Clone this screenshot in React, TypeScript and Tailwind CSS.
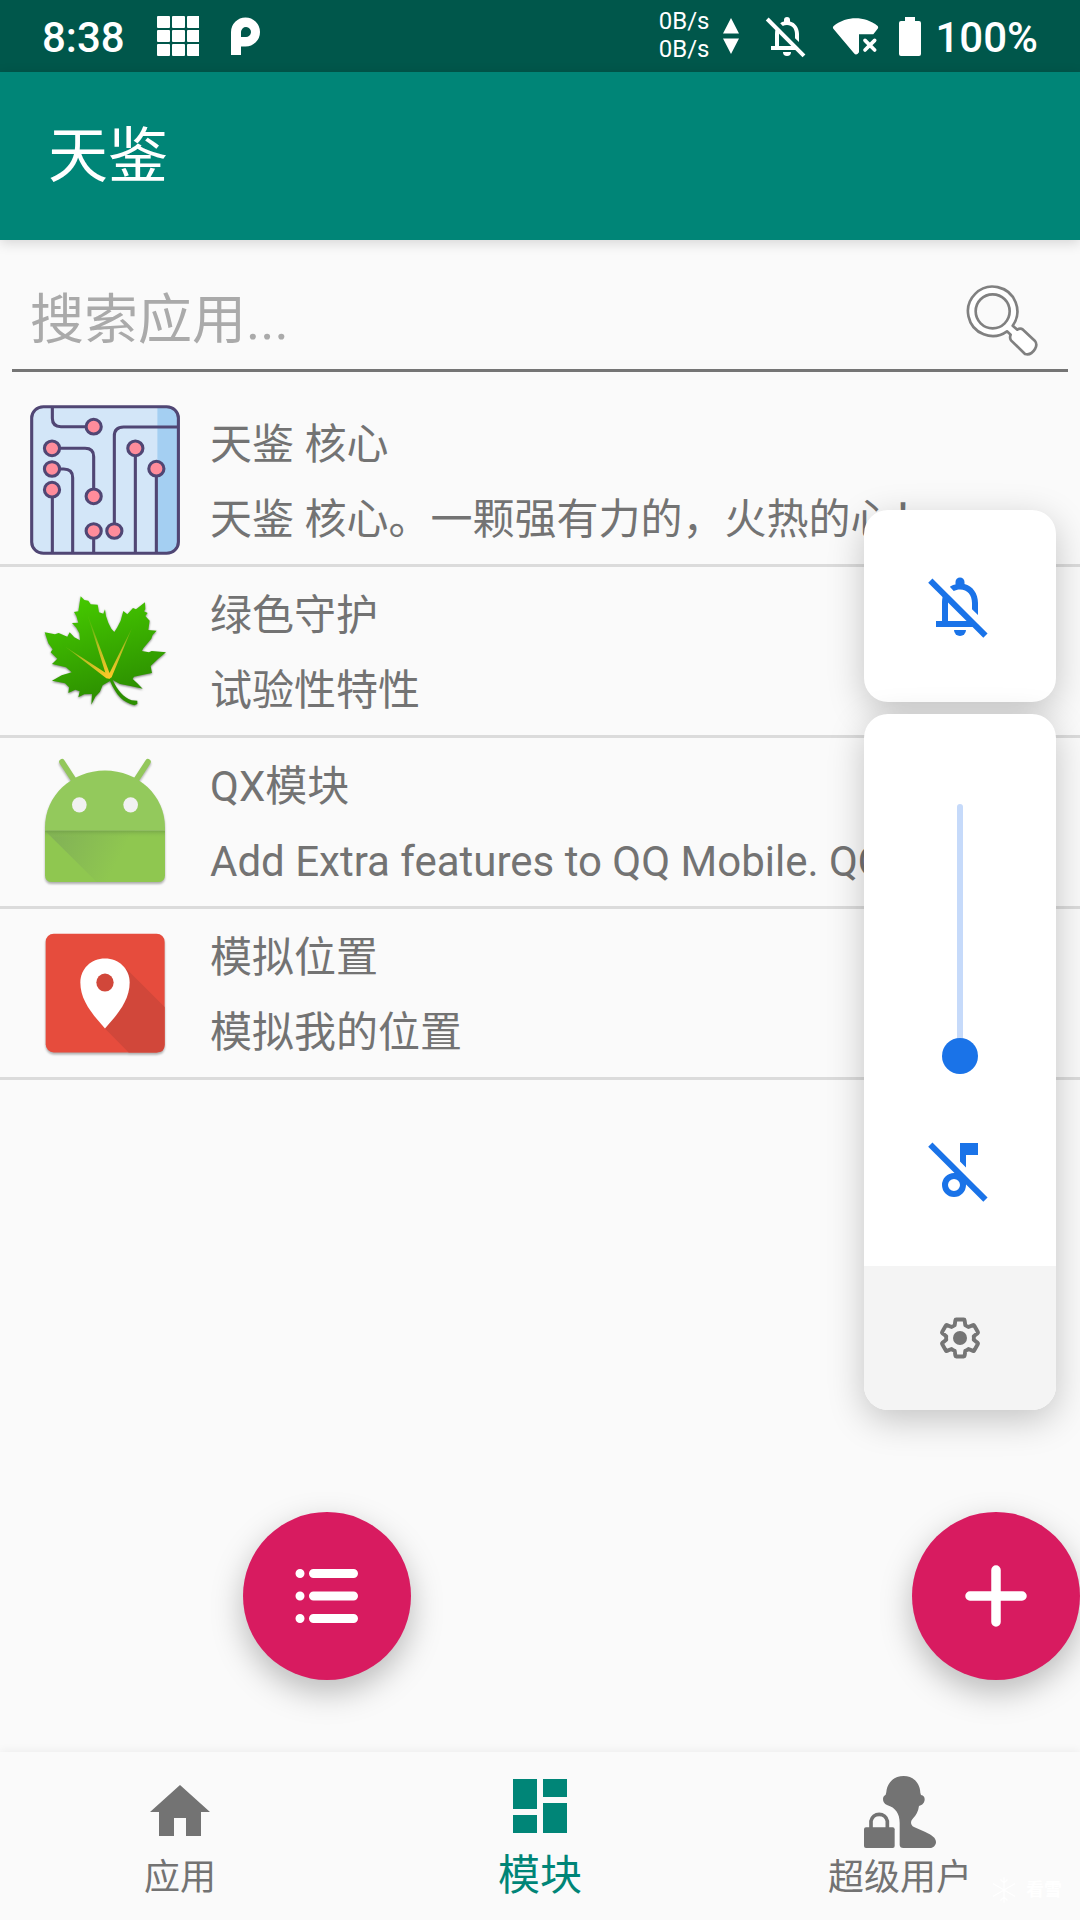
import React, { useState } from 'react';

// ─── Types ────────────────────────────────────────────────────────────────────

interface ModuleItem {
  id: string;
  name: string;
  description: string;
  icon: React.ReactNode;
}

interface Tab {
  id: string;
  label: string;
  icon: React.ReactNode;
}

// ─── Shared icons ─────────────────────────────────────────────────────────────

const BellOffIcon = ({ className }: { className: string }) => (
  <svg viewBox="0 0 24 24" fill="currentColor" className={className} aria-hidden="true">
    <path d="M2.81 2.81 1.4 4.22l18.38 18.38 1.41-1.41z" />
    <path d="M4 17h2v-6c0-.9.1-1.8.4-2.6L8 10v7h7.2l2 2H4z" />
    <path d="M8.6 5.6c.6-.4 1.2-.7 1.9-.8V4a1.5 1.5 0 0 1 3 0v.7c2.7.6 4.5 3.2 4.5 6.3v4l-2-1.9V11c0-2.6-1.5-4.5-4-4.5-.8 0-1.5.2-2.1.5z" />
    <path d="M10 20h4a2 2 0 0 1-4 0z" />
  </svg>
);

const MusicOffIcon = () => (
  <svg viewBox="0 0 24 24" fill="currentColor" className="size-18" aria-hidden="true">
    <path d="M2.81 2.81 1.4 4.22l18.38 18.38 1.41-1.41z" />
    <path d="M12 3h6v4h-4v4.2l-2-2z" />
    <path
      fillRule="evenodd"
      d="M10 13c.8 0 1.4.2 2 .5v-1.1l2 1.8V17a4 4 0 1 1-4-4zm0 2a2 2 0 1 0 0 4 2 2 0 0 0 0-4z"
    />
  </svg>
);

const GearIcon = () => (
  <svg viewBox="0 0 24 24" className="size-12" aria-hidden="true">
    <path
      transform="translate(.9 .9) scale(.925)"
      fill="none"
      stroke="currentColor"
      strokeWidth="2.1"
      strokeLinejoin="round"
      d="M19.43 12.98c.04-.32.07-.64.07-.98 0-.34-.03-.66-.07-.98l2.11-1.65c.19-.15.24-.42.12-.64l-2-3.46c-.12-.22-.37-.3-.61-.22l-2.49 1c-.52-.4-1.08-.73-1.69-.98l-.38-2.65C14.46 2.18 14.25 2 14 2h-4c-.25 0-.46.18-.49.42l-.38 2.65c-.61.25-1.17.59-1.69.98l-2.49-1c-.23-.09-.49 0-.61.22l-2 3.46c-.13.22-.07.49.12.64l2.11 1.65c-.04.32-.07.65-.07.98 0 .33.03.66.07.98l-2.11 1.65c-.19.15-.24.42-.12.64l2 3.46c.12.22.37.3.61.22l2.49-1c.52.4 1.08.73 1.69.98l.38 2.65c.03.24.24.42.49.42h4c.25 0 .46-.18.49-.42l.38-2.65c.61-.25 1.17-.59 1.69-.98l2.49 1c.23.09.49 0 .61-.22l2-3.46c.12-.22.07-.49-.12-.64z"
    />
    <circle cx="12" cy="12" r="3.5" fill="currentColor" />
  </svg>
);

const SearchIcon = () => (
  <svg viewBox="438 96 216 216" fill="#fff" stroke="#808080" strokeWidth="8" strokeLinejoin="round" className="size-18 overflow-visible" aria-hidden="true">
    <path d="M578 221l14 12q9-6 17 0l36 34q8 10 0 24-12 20-30 15L573 265q-5-8-1-17l-11-10A74 74 0 1 1 578 221z" />
    <circle cx="518" cy="178" r="51" fill="#fafafa" />
  </svg>
);

// ─── App icons ────────────────────────────────────────────────────────────────

const NODES = [
  [272, 530], [151, 595], [151, 657], [151, 719], [272, 739],
  [272, 843], [332, 843], [393, 595], [454, 656],
];

const CircuitIcon = () => (
  <svg viewBox="0 0 150 150" className="size-[150px] shrink-0" aria-hidden="true">
    <g transform="translate(-30 -155) scale(.3444 .3333)" stroke="#504674" strokeWidth="9" fill="none">
      <rect x="92" y="470" width="426" height="440" rx="34" fill="#d3e6f8" stroke="none" />
      <path d="M457 470h27a34 34 0 0 1 34 34v372a34 34 0 0 1-34 34h-27z" fill="#a4cff2" stroke="none" />
      <rect x="92" y="470" width="426" height="440" rx="34" />
      <path d="M152 470v35q0 25 25 25h90M151 595h96q25 0 25 25v119M151 657h34q26 0 26 26v227M152 719v191M272 843v67M332 843V558q0-27 27-27h159M393 595v315M454 656v254" />
      {NODES.map(([cx, cy]) => (
        <circle key={`${cx}-${cy}`} cx={cx} cy={cy} r="22" fill="#ff8c9b" />
      ))}
    </g>
  </svg>
);

const LeafIcon = () => (
  <svg viewBox="0 0 150 150" className="size-[150px] shrink-0 drop-shadow-[0_1px_1px_rgba(0,0,0,0.5)]" aria-hidden="true">
    <defs>
      <linearGradient id="leaf" x1="0" y1="0" x2=".3" y2="1">
        <stop offset="0" stopColor="#48cf00" />
        <stop offset="1" stopColor="#2c8f00" />
      </linearGradient>
      <radialGradient id="vein" gradientUnits="userSpaceOnUse" cx="237" cy="294" r="205">
        <stop offset="0" stopColor="#ffc928" />
        <stop offset=".5" stopColor="#d9c02a" stopOpacity=".8" />
        <stop offset="1" stopColor="#8cc020" stopOpacity="0" />
      </radialGradient>
    </defs>
    <g transform="translate(0 4) scale(.3333)">
      <path
        fill="url(#leaf)"
        d="M152 49L163 60 175 62 182 73 203 74 207 97 220 101 225 88 228 108 235 128 244 146 253 156 262 142 272 122 280 93 292 103 309 84 318 88 345 67 346 88 342 94 353 99 346 108 359 122 355 150 380 152 368 165 364 176 340 205 336 213 357 217 365 213 408 217 384 237 362 258 366 279 340 284 312 290 308 297 322 310 338 326 305 319 270 312 248 300C262 330 280 352 305 361L322 362 322 372 313 376C280 368 258 345 240 303L218 316 210 335 196 350 184 374 186 342 163 343 145 352 149 334 136 329 115 339 117 322 105 310 66 302 95 286 125 277 108 262 66 252 82 236 62 217 68 208 55 190 44 157 75 163 86 159 112 170 119 157 133 172 150 181 148 160 139 143 126 129 145 128 139 108 132 96 145 94z"
      />
      <path fill="url(#vein)" d="M167 88l75 200-2 9-10-6zM106 200l132 86-1 10-8-1zM306 144l-61 148-7 4-5-6z" />
    </g>
  </svg>
);

const AndroidIcon = () => (
  <svg viewBox="0 0 150 150" className="size-[150px] shrink-0 drop-shadow-[0_2px_1px_rgba(0,0,0,0.3)]" aria-hidden="true">
    <defs>
      <linearGradient id="fold" gradientUnits="userSpaceOnUse" x1="170" y1="785" x2="350" y2="880">
        <stop offset="0" stopColor="#82b256" />
        <stop offset="1" stopColor="#8fc750" />
      </linearGradient>
      <linearGradient id="crease" x1="0" y1="0" x2="0" y2="1">
        <stop offset="0" stopColor="#6f9c47" stopOpacity=".7" />
        <stop offset="1" stopColor="#8fc750" stopOpacity="0" />
      </linearGradient>
    </defs>
    <g transform="translate(-30 -187) scale(.3333 .3444)">
      <path d="M186 586l38 57M444 586l-38 57" stroke="#93c75b" strokeWidth="17" strokeLinecap="round" />
      <path d="M135 786v-10c0-92 80-165 180-165s180 73 180 165v10z" fill="#93c95c" />
      <path d="M135 786h360v129q0 20-21 20H156q-21 0-21-20z" fill="#8fc750" />
      <path d="M135 786h270l15 149H290z" fill="url(#fold)" />
      <rect x="135" y="786" width="360" height="20" fill="url(#crease)" />
      <circle cx="238" cy="711" r="22" fill="#f1f1f1" />
      <circle cx="392" cy="711" r="22" fill="#f1f1f1" />
    </g>
  </svg>
);

const PinIcon = () => (
  <svg viewBox="0 0 150 150" className="size-[150px] shrink-0 drop-shadow-[0_2px_1px_rgba(0,0,0,0.3)]" aria-hidden="true">
    <g transform="translate(-30 -358) scale(.3333 .3444)">
      <rect x="137" y="1085" width="357" height="345" rx="24" fill="#e64c3d" />
      <path d="M378 1186l116 112v110q0 22-24 22h-84l-71-70z" fill="#d1473a" />
      <path d="M315 1157c42 0 74 30 74 70 0 52-36 92-74 133-38-41-74-81-74-133 0-40 32-70 74-70z" fill="#fff" />
      <circle cx="315" cy="1227" r="26" fill="#d1473a" />
    </g>
  </svg>
);

// ─── Tab icons ────────────────────────────────────────────────────────────────

const HomeIcon = () => (
  <svg viewBox="0 0 24 24" fill="currentColor" className="size-18" aria-hidden="true">
    <path d="M10 20v-6h4v6h5v-8h3L12 3 2 12h3v8z" />
  </svg>
);

const DashboardIcon = () => (
  <svg viewBox="0 0 24 24" fill="currentColor" className="size-18" aria-hidden="true">
    <path d="M3 13h8V3H3v10zm0 8h8v-6H3v6zm10 0h8V11h-8v10zm0-18v6h8V3h-8z" />
  </svg>
);

const SuperuserIcon = () => (
  <svg viewBox="252 108 216 216" fill="currentColor" className="size-18" aria-hidden="true">
    <path d="M371 108c30 0 49 22 50 50l2 7c8 1 11 6 11 13 0 10-7 18-17 20-2 16-9 28-17 36-9 9-10 21 2 27l34 15c20 9 32 18 32 30 0 10-8 18-18 18h-80c-7 0-11-4-11-10v-65c0-28-12-46-38-54-8-3-12-10-12-18 0-7 4-11 8-13l2-8c3-28 22-48 52-48z" />
    <rect x="252" y="262" width="92" height="62" rx="6" />
    <path d="M273 265v-22a25 25 0 0 1 49 0v22" fill="none" stroke="currentColor" strokeWidth="11" />
  </svg>
);

// ─── Data ─────────────────────────────────────────────────────────────────────

const MODULES: ModuleItem[] = [
  { id: 'core', name: '天鉴 核心', description: '天鉴 核心。一颗强有力的，火热的心！', icon: <CircuitIcon /> },
  { id: 'greenify', name: '绿色守护', description: '试验性特性', icon: <LeafIcon /> },
  { id: 'qx', name: 'QX模块', description: 'Add Extra features to QQ Mobile. QQ', icon: <AndroidIcon /> },
  { id: 'location', name: '模拟位置', description: '模拟我的位置', icon: <PinIcon /> },
];

const TABS: Tab[] = [
  { id: 'apps', label: '应用', icon: <HomeIcon /> },
  { id: 'modules', label: '模块', icon: <DashboardIcon /> },
  { id: 'superuser', label: '超级用户', icon: <SuperuserIcon /> },
];

// ─── Sections ─────────────────────────────────────────────────────────────────

const StatusBar = () => (
  <div className="flex h-18 items-center justify-between bg-[#00574b] px-[42px] text-white">
    <div className="flex items-center">
      <span className="pt-1 text-[42px] leading-12 font-medium">8:38</span>
      <svg viewBox="0 0 42 40" fill="currentColor" className="ml-8 h-10 w-[42px]" aria-hidden="true">
        {[0, 14, 28].map(y =>
          [0, 15, 30].map(x => <rect key={`${x}-${y}`} x={x} y={y} width="13" height="12" rx="1" />)
        )}
      </svg>
      <svg viewBox="0 0 30 38" className="ml-8 h-[38px] w-[30px]" aria-hidden="true">
        <path
          fill="currentColor"
          fillRule="evenodd"
          d="M0 38V15a14.5 14.5 0 1 1 14.5 14.5H10V38zM10 20h4.5a5 5 0 1 0-4.500-5z"
        />
      </svg>
    </div>
    <div className="flex items-center">
      <div className="pb-0.5 text-2xl leading-7">
        <p>0B/s</p>
        <p>0B/s</p>
      </div>
      <svg viewBox="0 0 16 36" fill="currentColor" className="ml-[14px] h-9 w-4" aria-hidden="true">
        <path d="M8 0l8 15.500H0zM8 36l8-15.500H0z" />
      </svg>
      <BellOffIcon className="ml-6 size-12" />
      <svg viewBox="690 44 144 120" fill="currentColor" className="ml-5 h-10 w-12" aria-hidden="true">
        <path d="M697 82q-3-4 1-8c20-16 44-23 66-23s46 7 66 23q3 4 0 8l-13 17h-43v54q-8 12-15 3z" />
        <path d="M792 117l29 29M821 117l-29 29" stroke="currentColor" strokeWidth="11" strokeLinecap="round" />
      </svg>
      <svg viewBox="0 0 22 39" fill="currentColor" className="ml-5 h-[39px] w-[22px]" aria-hidden="true">
        <path d="M6 0h10v4h4q2 0 2 2v31q0 2-2 2H2q-2 0-2-2V6q0-2 2-2h4z" />
      </svg>
      <span className="ml-[14px] pt-1 text-[42px] leading-12 font-medium">100%</span>
    </div>
  </div>
);

const VolumePanel = () => {
  const [volume, setVolume] = useState(0);

  return (
    <div className="absolute top-[510px] right-6 flex w-48 flex-col gap-3 text-[#1a73e8]">
      <button
        aria-label="静音"
        className="flex h-48 items-center justify-center rounded-3xl bg-white shadow-[0_10px_36px_rgba(0,0,0,0.22)]"
      >
        <BellOffIcon className="size-18" />
      </button>
      <div className="overflow-hidden rounded-3xl bg-white shadow-[0_10px_36px_rgba(0,0,0,0.22)]">
        <div className="flex flex-col items-center pt-[90px] pb-15">
          <input
            type="range"
            aria-label="媒体音量"
            min={0}
            max={100}
            value={volume}
            onChange={e => setVolume(Number(e.target.value))}
            className="h-[270px] w-9 appearance-none bg-transparent [direction:rtl] [writing-mode:vertical-lr] [&::-webkit-slider-runnable-track]:mx-auto [&::-webkit-slider-runnable-track]:w-[6px] [&::-webkit-slider-runnable-track]:rounded-full [&::-webkit-slider-runnable-track]:bg-[#c6dafa] [&::-webkit-slider-thumb]:-ml-[15px] [&::-webkit-slider-thumb]:size-9 [&::-webkit-slider-thumb]:appearance-none [&::-webkit-slider-thumb]:rounded-full [&::-webkit-slider-thumb]:bg-[#1a73e8]"
          />
          <button aria-label="媒体静音" className="mt-15">
            <MusicOffIcon />
          </button>
        </div>
        <button aria-label="声音设置" className="flex h-36 w-full items-center justify-center bg-[#f4f4f4] text-[#757575]">
          <GearIcon />
        </button>
      </div>
    </div>
  );
};

// ─── App ──────────────────────────────────────────────────────────────────────

export default function App() {
  const [query, setQuery] = useState('');
  const [activeTab, setActiveTab] = useState('modules');

  const fab =
    'flex size-[168px] items-center justify-center rounded-full bg-[#d81b60] text-white shadow-[0_12px_32px_rgba(0,0,0,0.26)]';

  return (
    <div className="relative flex min-h-screen flex-col overflow-hidden bg-[#fafafa] font-[Roboto,'Noto_Sans_CJK_SC',sans-serif] text-[#737373]">
      <StatusBar />

      <header className="flex h-[168px] items-center bg-[#008577] px-12 shadow-[0_3px_12px_rgba(0,0,0,0.15)]">
        <h1 className="pt-0.5 text-6xl leading-18 text-white">天鉴</h1>
      </header>

      <main className="flex flex-1 flex-col">
        {/* Search */}
        <label className="mx-3 mt-[30px] flex h-[102px] items-center border-b-3 border-[#757575] pr-[30px] pl-[18px]">
          <input
            type="text"
            aria-label="搜索应用"
            placeholder="搜索应用..."
            value={query}
            onChange={e => setQuery(e.target.value)}
            className="h-20 min-w-0 flex-1 bg-transparent pt-0.5 text-[54px] outline-none placeholder:text-[#aaaaaa]"
          />
          <SearchIcon />
        </label>

        {/* Module list */}
        <ul className="mt-6">
          {MODULES.map(item => (
            <li key={item.id} className="flex h-[171px] items-center gap-[30px] border-b-3 border-[#dbdbdb] pl-[30px]">
              {item.icon}
              <div className="min-w-0 flex-1 overflow-hidden pt-1 text-[42px] leading-[75px] whitespace-nowrap">
                <p>{item.name}</p>
                <p>{item.description}</p>
              </div>
            </li>
          ))}
        </ul>

        {/* Floating actions */}
        <div className="mt-auto mb-18 flex justify-between pl-[22.5%]">
          <button aria-label="列表" className={fab}>
            <svg viewBox="0 0 64 56" className="h-14 w-16" aria-hidden="true">
              <path
                d="M5 5.500h.01M5 28h.01M5 50.500h.01M18.500 5.500h40M18.500 28h40M18.500 50.500h40"
                stroke="currentColor"
                strokeWidth="9"
                strokeLinecap="round"
              />
            </svg>
          </button>
          <button aria-label="添加" className={fab}>
            <svg viewBox="0 0 62 62" className="size-[62px]" aria-hidden="true">
              <path d="M31 5v52M5 31h52" stroke="currentColor" strokeWidth="9.5" strokeLinecap="round" />
            </svg>
          </button>
        </div>
      </main>

      <nav className="grid h-[168px] grid-cols-3 shadow-[0_0_10px_rgba(0,0,0,0.07)]">
        {TABS.map(tab => {
          const isActive = tab.id === activeTab;
          return (
            <button
              key={tab.id}
              onClick={() => setActiveTab(tab.id)}
              className={`flex flex-col items-center ${isActive ? 'pt-[18px] text-[42px] leading-17 text-[#008577]' : 'pt-6 text-4xl leading-15'}`}
            >
              {tab.icon}
              <span>{tab.label}</span>
            </button>
          );
        })}
      </nav>

      {/* Watermark */}
      <div className="pointer-events-none absolute right-[18px] bottom-4 flex items-center gap-2 text-lg leading-7 font-bold text-white">
        <svg viewBox="0 0 24 24" fill="none" stroke="currentColor" strokeWidth="1" className="size-7" aria-hidden="true">
          <path d="M12 1v22M2.5 6.5l19 11M21.5 6.5l-19 11M9 3l3 3 3-3M9 21l3-3 3 3" />
        </svg>
        <span>看雪</span>
      </div>

      <VolumePanel />
    </div>
  );
}
